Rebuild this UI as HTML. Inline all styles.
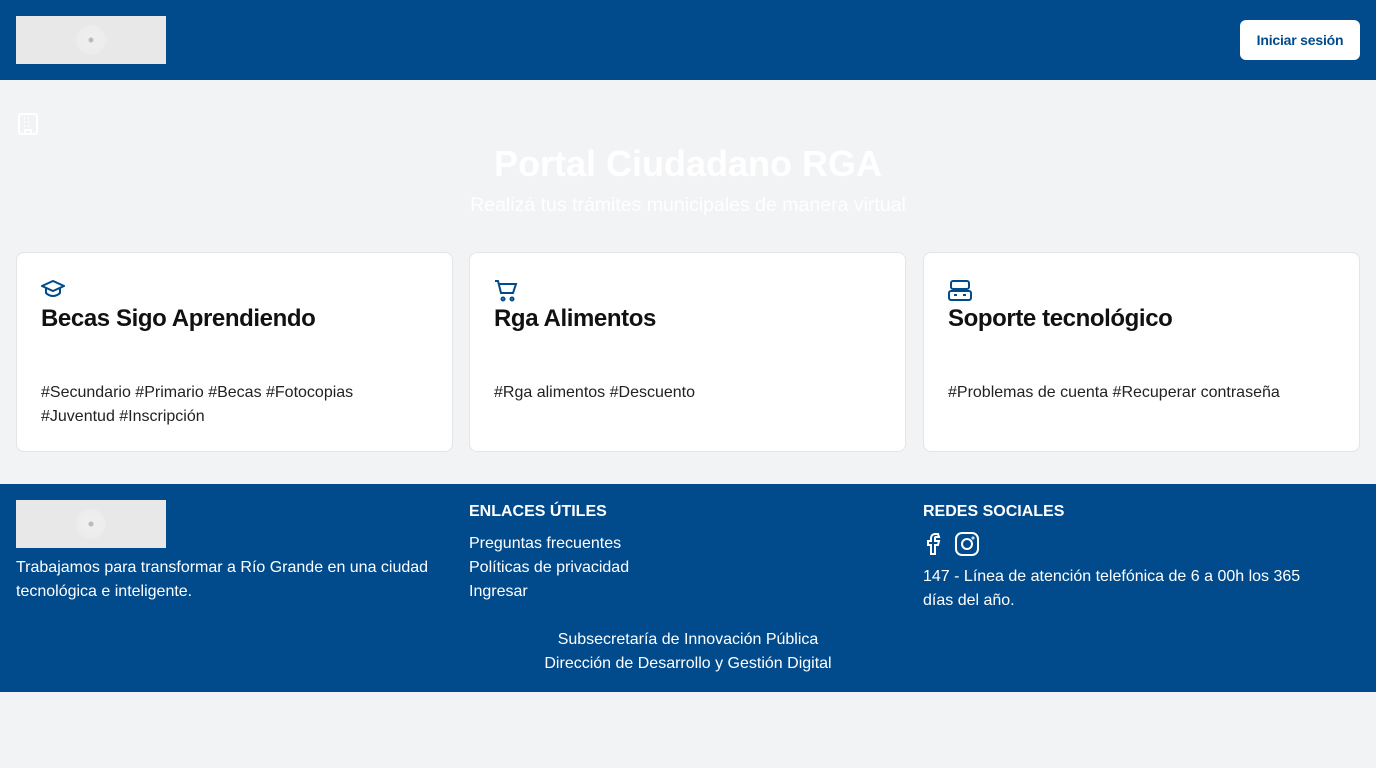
<!DOCTYPE html>
<html><head><meta charset="utf-8"><style>
*{box-sizing:border-box;margin:0;padding:0}
body{width:1376px;height:768px;background:#f2f3f5;font-family:"Liberation Sans",sans-serif;position:relative;overflow:hidden}
.hdr{position:absolute;left:0;top:0;width:1376px;height:80px;background:#014b8d}
.logo{position:absolute;width:150px;height:48px;background:#e8e8e8}
.logo::after{content:"";position:absolute;left:60px;top:9px;width:30px;height:30px;border-radius:50%;background:radial-gradient(#bbb 0 2px,#efefef 3px,#ececec 15px,transparent 16px)}
.btn{position:absolute;right:16px;top:20px;width:120px;height:40px;background:#fff;border-radius:6px;color:#014b8d;font-size:14px;font-weight:bold;text-align:center;line-height:40px;letter-spacing:-0.2px}
.t1{position:absolute;top:143px;width:100%;text-align:center;color:#fff;font-size:36px;font-weight:bold}
.t2{position:absolute;top:194px;width:100%;text-align:center;color:#fff;font-size:19.5px}
.card{position:absolute;top:252px;width:437px;height:200px;background:#fff;border:1px solid #e3e5e8;border-radius:8px}
.card svg{position:absolute;left:24px;top:26px}
.card h3{position:absolute;left:24px;top:52px;font-size:24px;font-weight:bold;color:#111;letter-spacing:-0.4px}
.card p{position:absolute;left:24px;top:128px;width:345px;font-size:16px;line-height:24px;color:#222}
.ftr{position:absolute;left:0;top:484px;width:1376px;height:208px;background:#014b8d;color:#fff;font-size:16px;line-height:24px}
.ftr h4{font-size:16px;font-weight:bold}
</style></head><body>
<div class="hdr"><div class="logo" style="left:16px;top:16px"></div><div class="btn">Iniciar sesión</div></div>
<svg style="position:absolute;left:18px;top:113px" width="20" height="22" viewBox="0 0 20 22" fill="none" stroke="#fff" stroke-width="2"><rect x="1" y="1" width="18" height="20" rx="2"/><path d="M6 5h1M10 5h1M14 5h0M6 9h1M10 9h1M14 9h0M6 13h1M10 13h1M14 13h0M7 20v-3h6v3"/></svg>
<div class="t1">Portal Ciudadano RGA</div>
<div class="t2">Realizá tus trámites municipales de manera virtual</div>
<div class="card" style="left:16px"><svg width="24" height="20" viewBox="0 0 24 20" fill="none" stroke="#014b8d" stroke-width="2"><path d="M1 7l11-5 11 5-11 5z"/><path d="M5 9v5c2 2 4 3 7 3s5-1 7-3V9"/></svg><h3>Becas Sigo Aprendiendo</h3><p>#Secundario #Primario #Becas #Fotocopias #Juventud #Inscripción</p></div>
<div class="card" style="left:469px"><svg width="24" height="24" viewBox="0 0 24 24" fill="none" stroke="#014b8d" stroke-width="2"><path d="M1 2h3l3 12h12l3-9H5"/><circle cx="9" cy="20" r="1.5"/><circle cx="18" cy="20" r="1.5"/></svg><h3>Rga Alimentos</h3><p>#Rga alimentos #Descuento</p></div>
<div class="card" style="left:923px"><svg width="24" height="24" viewBox="0 0 24 24" fill="none" stroke="#014b8d" stroke-width="2"><rect x="3" y="2" width="18" height="8" rx="2"/><rect x="1" y="12" width="22" height="9" rx="2"/><path d="M6 16h3M15 16h3"/></svg><h3>Soporte tecnológico</h3><p style="width:400px">#Problemas de cuenta #Recuperar contraseña</p></div>
<div class="ftr">
<div class="logo" style="left:16px;top:16px"></div>
<div style="position:absolute;left:16px;top:72px;width:440px">Trabajamos para transformar a Río Grande en una ciudad tecnológica e inteligente.</div>
<div style="position:absolute;left:469px;top:16px"><h4>ENLACES ÚTILES</h4><div style="margin-top:8px">Preguntas frecuentes<br>Políticas de privacidad<br>Ingresar</div></div>
<div style="position:absolute;left:923px;top:16px;width:400px"><h4>REDES SOCIALES</h4>
<svg style="margin-top:8px" width="60" height="24" viewBox="0 0 60 24" fill="none" stroke="#fff" stroke-width="2"><path d="M15 2h-3a4 4 0 0 0-4 4v3H5v4h3v9h4v-9h3l1-4h-4V6a1 1 0 0 1 1-1h3z"/><rect x="33" y="1" width="22" height="22" rx="6"/><circle cx="44" cy="12" r="5"/><circle cx="50" cy="6" r=".5"/></svg>
<div style="margin-top:1px">147 - Línea de atención telefónica de 6 a 00h los 365 días del año.</div></div>
<div style="position:absolute;left:0;top:144px;width:100%;text-align:center">Subsecretaría de Innovación Pública<br>Dirección de Desarrollo y Gestión Digital</div>
</div>
</body></html>
